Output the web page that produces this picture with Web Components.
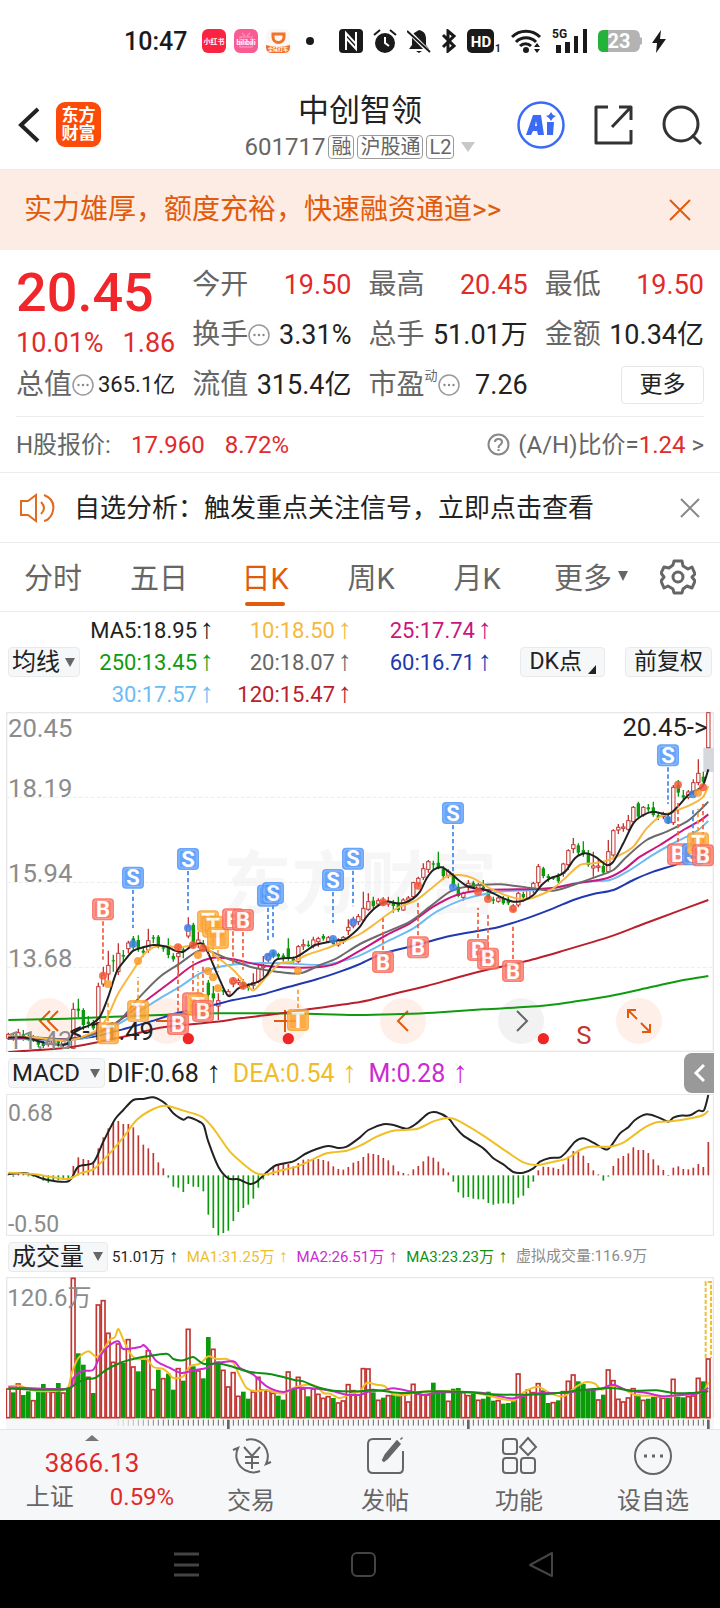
<!DOCTYPE html>
<html lang="zh-CN">
<head>
<meta charset="utf-8">
<meta name="viewport" content="width=device-width, initial-scale=1">
<title>中创智领 601717</title>
<style>
	:root {
		--text: #222;
		--text-soft: #666;
		--text-muted: #8c8c8c;
		--accent: #e25b0c;
		--up: #e02b2b;
		--line: #ececee;
		--chip-bg: #f6f7f9;
	}

	body {
		margin: 0;
		background: #fff;
		color: var(--text);
		font-family: Roboto, "Liberation Sans", "Noto Sans CJK SC", sans-serif;
		font-size: 24px;
	}
</style>
</head>
<body>
<system-status></system-status>
<stock-header name="中创智领" code="601717"></stock-header>
<main>
	<promo-banner>实力雄厚，额度充裕，快速融资通道&gt;&gt;</promo-banner>
	<quote-panel></quote-panel>
	<h-share-row></h-share-row>
	<notice-bar>自选分析：触发重点关注信号，立即点击查看</notice-bar>
	<period-tabs></period-tabs>
	<ma-legend></ma-legend>
	<price-chart></price-chart>
	<indicator-head>
		<pill-select slot="select" label="副图指标" value="MACD" size="97"></pill-select>
		<ind-value color="#222">DIF:0.68</ind-value>
		<ind-value color="#efbd2c">DEA:0.54</ind-value>
		<ind-value color="#cb2bd0">M:0.28</ind-value>
		<edge-toggle slot="end"></edge-toggle>
	</indicator-head>
	<macd-chart></macd-chart>
	<indicator-head dense>
		<pill-select slot="select" label="成交量指标" value="成交量" size="100"></pill-select>
		<ind-value color="#222">51.01万</ind-value>
		<ind-value color="#efbd2c">MA1:31.25万</ind-value>
		<ind-value color="#cb2bd0">MA2:26.51万</ind-value>
		<ind-value color="#109010">MA3:23.23万</ind-value>
		<ind-value color="#8c8c8c" flat>虚拟成交量:116.9万</ind-value>
	</indicator-head>
	<volume-chart></volume-chart>
</main>
<action-bar></action-bar>
<system-nav></system-nav>

<script>
const RED = '#c23531';
const GREEN = '#0a9a0a';
const STEP = 15;
const FIRST_X = 25;

const CANDLES = `
r,998,1003,1015,1020 r,1000,1008,1014,1022 r,986,998,1012,1018 g,990,1003,1012,1022 g,1003,1008,1016,1022
g,1005,1010,1020,1026 g,1010,1018,1034,1042 g,1020,1028,1038,1044 r,1018,1024,1034,1040 r,1015,1020,1030,1036
g,1016,1022,1030,1040 r,1018,1024,1034,1042 g,1018,1026,1036,1046 r,908,928,1045,1045 g,896,926,932,952
g,925,930,975,990 g,948,965,972,985 g,960,966,985,990 r,848,860,968,985 r,800,825,852,860
r,752,796,822,840 g,764,781,784,815 r,730,760,815,825 g,750,765,770,785 r,722,729,746,760
g,708,715,740,750 g,706,720,745,755 g,738,752,758,770 r,686,722,750,758 g,705,712,716,730
g,705,710,738,745 g,735,742,746,755 g,715,742,765,775 g,760,768,778,785 r,735,760,770,820
g,740,748,756,775 r,652,680,708,715 g,668,674,735,745 r,695,720,732,745 g,720,730,738,745
g,840,848,885,905 g,858,880,895,905 r,880,902,918,960 g,860,870,875,885 r,868,875,885,890
r,832,840,850,862 r,835,842,848,855 g,838,845,860,868 g,850,858,864,872 r,820,848,856,868
r,795,805,845,850 r,768,798,803,830 r,760,766,780,790 g,750,755,768,775 g,758,762,770,780
g,760,766,772,785 g,715,745,775,782 g,770,776,786,792 r,735,740,785,790 r,718,734,738,750
g,722,734,738,742 r,710,720,738,745 r,710,716,725,740 g,702,708,716,722 r,708,713,725,730
g,712,720,732,738 r,715,722,735,740 r,708,712,725,732 r,658,682,692,705 r,650,660,678,685
r,642,650,665,675 r,575,625,660,668 r,580,605,628,632 g,590,602,618,625 r,595,602,612,618
r,592,604,612,618 r,590,604,612,620 g,600,606,618,638 g,590,608,630,635 r,595,600,630,632
r,588,594,600,608 r,545,548,590,598 r,530,535,550,560 r,490,506,532,540 r,480,485,508,518
g,482,490,494,510 g,455,488,502,508 g,498,506,528,540 r,508,514,526,535 g,520,528,558,565
g,550,560,588,592 r,575,580,592,602 r,540,550,560,572 g,542,548,562,568 r,548,556,570,575
g,540,560,566,575 g,568,574,596,600 g,590,598,602,612 r,590,594,604,608 g,588,596,610,614
g,590,602,610,615 r,612,618,630,635 r,575,580,615,622 g,575,582,592,605 r,565,570,595,600
r,545,550,570,580 r,492,500,548,560 g,500,505,528,535 g,522,528,534,545 g,530,533,536,540
g,520,530,544,550 r,488,492,520,530 r,448,452,494,510 r,414,434,446,460 g,430,436,458,465
g,424,450,460,470 g,450,460,495,500 r,455,498,504,530 r,478,498,502,515 g,490,498,518,525
r,420,455,515,520 r,388,392,465,470 r,372,382,390,402 r,370,381,385,395 r,345,362,388,392
r,318,322,365,370 g,305,310,350,355 r,318,322,345,350 g,312,322,328,335 g,305,322,345,350
g,340,346,354,360 r,335,342,350,358 g,340,350,368,372 r,255,262,368,375 g,240,255,278,290
g,270,286,292,300 r,270,276,292,298 r,238,248,275,285 r,178,220,248,256 g,215,230,245,250
r,38,38,143,143`;

const AVERAGES = [
	['#109a10', '25,960 200,956 400,948 650,940 800,940 950,942 1080,945 1200,942 1300,938 1450,928 1620,918 1720,905 1830,888 1950,862 2050,840 2125,828'],
	['#b9202b', '25,1056 150,1048 220,1040 300,1025 380,1008 450,990 500,980 650,965 720,955 820,943 930,927 1080,906 1180,882 1280,858 1380,830 1480,805 1580,783 1680,755 1830,710 1930,672 2030,635 2125,600'],
	['#2038b0', '25,1016 200,1018 280,1010 380,985 450,965 530,940 620,920 700,900 780,885 850,865 950,838 1020,815 1080,792 1150,760 1250,735 1350,708 1450,690 1500,680 1580,655 1660,625 1720,600 1780,582 1840,570 1900,540 1960,515 2030,493 2080,470 2125,452'],
	['#6cbcf2', '25,1015 150,1020 250,1015 340,980 400,945 480,895 540,860 600,820 660,800 750,790 850,790 970,795 1020,785 1080,766 1160,725 1240,685 1310,635 1400,595 1500,575 1600,570 1680,560 1750,545 1830,540 1890,510 1950,470 2010,435 2060,410 2095,390 2125,363'],
	['#c9157d', '25,1012 150,1018 250,1010 330,980 400,930 460,885 520,840 580,795 640,773 700,778 780,795 850,802 950,802 1010,790 1080,752 1160,705 1230,670 1300,620 1370,585 1450,570 1550,568 1650,565 1720,552 1820,535 1870,510 1920,470 1980,435 2050,390 2100,362 2125,343'],
	['#6b6b6b', '25,1010 120,1013 220,1018 300,995 360,960 420,890 480,830 540,790 590,755 620,750 680,775 750,800 830,815 900,820 960,795 1010,775 1080,732 1150,700 1230,665 1290,620 1350,575 1400,560 1500,553 1600,565 1660,572 1720,555 1790,530 1840,510 1880,470 1940,420 2000,395 2060,365 2095,335 2125,305'],
	['#f8b840', '25,1008 100,1012 200,1022 260,1005 300,985 325,945 355,880 400,810 430,765 460,742 500,738 540,742 580,735 610,735 650,770 700,810 750,865 765,868 800,830 840,790 880,785 920,765 980,745 1040,720 1080,702 1120,675 1160,645 1200,620 1250,600 1300,560 1340,530 1380,525 1420,535 1470,565 1530,590 1580,598 1620,585 1660,565 1700,530 1740,495 1780,490 1820,482 1860,465 1900,440 1940,385 1980,350 2020,335 2060,320 2090,305 2110,290 2125,258'],
	['#222', '25,1013 70,1012 110,1022 150,1032 200,1032 220,1000 245,985 270,975 300,950 325,890 350,815 375,780 400,752 430,742 460,735 500,740 525,752 550,755 575,738 605,730 625,760 655,830 685,888 715,865 745,855 775,845 800,825 825,782 850,775 885,772 915,755 945,735 975,728 1005,722 1035,718 1060,700 1080,680 1100,650 1130,620 1160,605 1190,610 1215,608 1240,595 1260,575 1280,535 1300,510 1325,502 1350,518 1375,540 1400,558 1425,565 1450,568 1480,580 1510,595 1540,605 1570,602 1600,585 1625,555 1650,535 1680,525 1700,510 1725,475 1755,460 1785,470 1820,495 1840,485 1870,430 1900,370 1930,345 1960,335 2005,343 2035,318 2065,285 2095,268 2110,255 2125,208']
];

// letter, x, badge y, dot y
const MARKS = [
	['B', 309, 628, 827], ['T', 324, 1000, 852], ['S', 399, 533, 732], ['T', 414, 933, 783],
	['S', 564, 477, 684], ['B', 534, 972, 742], ['B', 579, 910, 735], ['T', 594, 915, 765],
	['B', 609, 933, 745], ['T', 624, 664, 813], ['T', 639, 680, 832], ['T', 654, 714, 865],
	['B', 699, 658, 843], ['B', 729, 660, 857], ['S', 804, 587, 770], ['S', 819, 579, 760],
	['T', 894, 960, 812], ['S', 999, 540, 717], ['S', 1059, 476, 667], ['B', 1149, 786, 607],
	['B', 1254, 742, 557], ['S', 1359, 339, 562], ['B', 1434, 750, 575], ['B', 1464, 776, 597],
	['B', 1539, 813, 627], ['S', 2004, 166, 360], ['B', 2034, 463, 254], ['S', 2079, 463, 283],
	['T', 2094, 430, 278], ['B', 2109, 466, 262]
];

const MARK_COLORS = {
	B: ['#fa6a5a', '#f4593a'],
	S: ['#4f96fb', '#3f83ea'],
	T: ['#fba12c', '#fb9a26']
};

const MACD_BARS = `373 380 372 370 379 380 382 392 398 390 390 390 392 348 322 327 330 335 295 262 235 218 213 222
222 232 256 284 295 309 337 355 383 410 413 426 402 410 411 424 494 534 556 549 542 513 486 474 464 446 413 388 372
347 342 341 342 349 339 329 328 327 327 330 334 349 357 359 351 338 333 321 310 312 315 324 331 346 364 369 373 358
348 334 319 323 335 355 367 395 427 443 441 446 448 448 459 464 461 460 460 463 443 437 414 395 361 350 351 353 357
343 320 303 306 317 339 361 373 392 380 348 325 318 310 292 300 300 309 328 346 360 378 353 349 357 358 353 342 351 276`;

const MACD_LINES = [
	['#222', '25,372 70,369 100,375 135,388 205,394 235,350 280,338 310,275 345,208 370,180 400,150 430,147 460,142 495,160 520,190 550,209 565,202 600,216 612,228 625,275 655,350 685,385 715,388 750,402 770,395 800,367 830,345 880,334 915,312 950,297 985,288 1015,294 1040,290 1080,262 1105,240 1150,223 1180,225 1220,236 1250,220 1285,190 1310,187 1345,205 1365,230 1390,257 1450,295 1480,325 1510,343 1540,366 1570,368 1600,355 1620,335 1650,324 1680,322 1700,305 1725,275 1750,265 1780,278 1815,298 1830,292 1860,250 1885,232 1905,210 1940,193 1975,202 2005,215 2020,203 2040,197 2070,196 2095,182 2112,181 2125,135'],
	['#f0bf24', '25,368 100,372 150,380 205,387 240,370 280,358 320,320 370,262 410,210 460,177 500,167 550,182 605,200 640,235 690,305 740,350 770,370 800,373 840,362 890,350 920,337 980,310 1040,302 1080,287 1130,260 1180,242 1250,237 1300,214 1350,204 1380,215 1450,257 1520,305 1570,337 1610,345 1660,335 1700,326 1740,300 1770,290 1830,290 1870,278 1930,235 1970,217 2020,213 2080,203 2110,195 2125,182']
];

const VOLUMES = `r447 g458 r432 g466 g455 r482 g452 g433 r455 r457 g430 r459 g445 r115 g341 g375 r412 g460 r195 r182
r280 r367 r312 g370 r299 r381 g395 g360 r332 r449 g390 r416 g402 g450 r386 g423 r268 g380 r393 g416 g292 r328 g365 r391
r441 r398 r469 g456 g477 r456 r412 r450 r452 r460 g468 g480 r396 g445 r412 r447 g470 r447 r463 r475 r470 g475 r489 r483
r434 r452 r465 r386 r387 g458 r481 g474 r467 g465 g465 r462 r486 r433 r463 r465 r465 g429 g457 g457 r484 g447 g445 r458
r467 g460 r481 g477 g456 g483 r482 g492 g490 g485 r402 g470 r450 r458 r431 g452 g490 r488 g482 r455 r424 r405 g425 g433
g448 g448 r480 g465 r390 r422 r478 r486 r474 r446 g465 r481 g477 g472 r470 r475 g474 r418 g471 g473 r470 r468 r415 g425 r357`;

const VOLUME_LINES = [
	['#f0bf24', '25,440 60,438 90,450 130,455 200,447 215,400 235,355 265,335 290,352 310,330 330,300 345,292 355,268 370,300 390,340 410,358 440,358 460,382 490,388 505,400 520,415 550,410 570,380 600,372 625,350 650,358 680,358 700,370 720,410 740,445 770,455 800,450 830,460 855,460 880,445 920,435 950,440 970,460 990,462 1020,475 1060,460 1080,455 1100,430 1130,435 1155,440 1180,465 1220,466 1250,457 1350,455 1400,458 1440,462 1480,472 1540,482 1575,455 1615,442 1650,460 1690,470 1730,440 1760,427 1785,432 1805,450 1840,438 1870,448 1910,467 1960,468 2000,472 2040,465 2080,462 2110,455 2125,428'],
	['#cb2bd0', '25,443 200,447 220,415 245,395 280,390 300,350 325,320 355,305 370,328 420,322 430,316 445,330 470,365 510,385 545,400 580,392 620,385 640,372 700,365 720,385 760,405 800,440 850,457 890,445 960,448 1000,455 1040,465 1080,465 1110,455 1150,452 1180,446 1230,455 1270,465 1320,458 1400,458 1450,460 1500,470 1540,476 1600,462 1660,460 1700,460 1750,452 1800,448 1840,435 1880,452 1940,460 1990,470 2040,466 2090,462 2125,445'],
	['#0f8f0f', '25,447 100,450 200,449 230,430 260,418 285,415 320,390 360,370 400,358 440,350 500,342 520,358 550,362 580,352 610,372 660,372 700,382 750,397 820,405 880,420 910,425 950,442 1000,453 1080,455 1120,450 1200,460 1300,455 1400,457 1450,462 1540,465 1650,462 1740,452 1830,445 1900,453 1970,452 2020,460 2070,460 2125,455']
];

const barX = (index) => FIRST_X + index * STEP;

function smoothPath(text) {
	const points = text.split(' ').map((pair) => pair.split(',').map(Number));
	let d = `M${points[0]}`;

	for (let i = 0; i < points.length - 1; i++) {
		const [p0, p1, p2, p3] = [points[i - 1] || points[i], points[i], points[i + 1], points[i + 2] || points[i + 1]];

		d += `C${p1[0] + (p2[0] - p0[0]) / 7},${p1[1] + (p2[1] - p0[1]) / 7}`
			+ ` ${p2[0] - (p3[0] - p1[0]) / 7},${p2[1] - (p3[1] - p1[1]) / 7} ${p2}`;
	}

	return d;
}

function drawLines(lines) {
	return lines.map(([color, text]) =>
		`<path d="${smoothPath(text)}" fill="none" stroke="${color}" stroke-width="6" stroke-linejoin="round"/>`
	).join('');
}

class BaseElement extends HTMLElement {
	constructor() {
		super();
		this.attachShadow({ mode: 'open' });
	}

	connectedCallback() {
		const template = document.createElement('template');

		template.innerHTML = `
			<style>
				:host { display: block; box-sizing: border-box; }
				*, *::before, *::after { box-sizing: border-box; }
				svg { display: block; flex: none; }
				button {
					margin: 0;
					padding: 0;
					border: 0;
					background: none;
					color: inherit;
					font: inherit;
					cursor: pointer;
				}
				a { color: inherit; text-decoration: none; }
			</style>
			${this._getMarkup()}`;
		this.shadowRoot.replaceChildren(template.content.cloneNode(true));
		this._afterRender();
	}

	_afterRender() {}
}

class SystemStatus extends BaseElement {
	_getMarkup() {
		return `
			<style>
				:host {
					display: flex;
					justify-content: space-between;
					align-items: center;
					height: 80px;
					padding: 2px 54px 0 124px;
					color: #1a1a1a;
				}
				div { display: flex; align-items: center; }
				.apps { gap: 8px; }
				.radio { gap: 10px; }
				time { margin-right: 7px; font-size: 25px; font-weight: 500; }
				text { font-family: Roboto, "Noto Sans CJK SC", sans-serif; font-weight: 700; }
			</style>
			<div class="apps">
				<time>10:47</time>
				<svg width="24" height="24" viewBox="0 0 24 24"><rect width="24" height="24" rx="6" fill="#fb2440"/><text x="12" y="15" font-size="7" fill="#fff" text-anchor="middle">小红书</text></svg>
				<svg width="24" height="24" viewBox="0 0 24 24"><rect width="24" height="24" rx="6" fill="#fb5b93"/><path d="M8 4l3 3M16 4l-3 3M6 8h12v10H6z" fill="none" stroke="#fd8db4" stroke-width="1.5"/><text x="12" y="16" font-size="7" fill="#fff" text-anchor="middle">bilibili</text></svg>
				<svg width="24" height="24" viewBox="0 0 24 24"><rect width="24" height="24" rx="6" fill="#faf8f5"/><path d="M0 16q12 4 24 0v2q0 6-6 6H6q-6 0-6-6z" fill="#f6712a"/><path d="M7 5h11v3a5 5 0 0 1-11 0z" fill="none" stroke="#f6712a" stroke-width="3"/><text x="12" y="22" font-size="5" fill="#fff" text-anchor="middle">全球打车</text></svg>
				<svg width="24" height="24" viewBox="0 0 24 24"><circle cx="12" cy="12" r="4" fill="currentColor"/></svg>
			</div>
			<div class="radio">
				<svg width="24" height="24" viewBox="0 0 24 24"><rect width="24" height="24" rx="4" fill="currentColor"/><path d="M7 21V4l10 11V9M17 3v17L7 9v6" fill="none" stroke="#fff" stroke-width="2"/></svg>
				<svg width="24" height="24" viewBox="0 0 24 24"><circle cx="12" cy="14" r="10" fill="currentColor"/><path d="M1 6l6-5M23 6l-6-5" stroke="currentColor" stroke-width="2"/><path d="M12 8v6l4 3" fill="none" stroke="#fff" stroke-width="2"/></svg>
				<svg width="24" height="24" viewBox="0 0 24 24"><path d="M12 1c5 1 7 4 7 9v6l3 4H2l3-4V9q0-3 2-5z" fill="currentColor"/><path d="M2 3l20 20" stroke="#fff" stroke-width="4"/><path d="M0 2l23 21" stroke="currentColor" stroke-width="2"/><path d="M9 22h6l-3 2z" fill="currentColor"/></svg>
				<svg width="16" height="24" viewBox="0 0 16 24"><path d="M2 6l11 11-6 5V2l6 5L2 18" fill="none" stroke="currentColor" stroke-width="3"/></svg>
				<svg width="34" height="24" viewBox="0 0 34 24"><rect width="27" height="24" rx="5" fill="currentColor"/><text x="14" y="18" font-size="15" fill="#fff" text-anchor="middle">HD</text><text x="28" y="23" font-size="10" fill="currentColor">1</text></svg>
				<svg width="31" height="24" viewBox="0 0 31 24"><g fill="none" stroke="currentColor" stroke-width="3"><path d="M1 8a20 20 0 0 1 28 0M5 13a14 14 0 0 1 20 0M9 17a8 8 0 0 1 11 0"/></g><circle cx="15" cy="21" r="3" fill="currentColor"/><path d="M23 18l3-4 3 4zM23 20h6l-3 4z" fill="currentColor"/></svg>
				<svg width="36" height="30" viewBox="0 0 36 30"><text x="0" y="12" font-size="12" fill="currentColor">5G</text><path d="M4 19h5v8H4zM13 16h5v11h-5zM22 10h4v17h-4zM31 3h4v24h-4z" fill="currentColor"/></svg>
				<svg width="44" height="24" viewBox="0 0 44 24"><path d="M6 1h30q6 0 6 7l2 1v6l-2 1q0 7-6 7H6q-6 0-6-6V7q0-6 6-6z" fill="#b3b3b3"/><path d="M6 1h4v22H6q-6 0-6-6V7q0-6 6-6z" fill="#24b33a"/><text x="21" y="19" font-size="20" fill="#fff" text-anchor="middle">23</text></svg>
				<svg width="14" height="24" viewBox="0 0 14 24"><path d="M9 1L0 14h5l-1 10 10-14H8z" fill="currentColor"/></svg>
			</div>`;
	}
}

class StockHeader extends BaseElement {
	_getMarkup() {
		return `
			<style>
				:host {
					display: grid;
					grid-template-columns: 1fr auto 1fr;
					align-items: center;
					height: 90px;
					padding: 0 18px;
					border-bottom: 1px solid var(--line);
				}
				.left, .right { display: flex; align-items: center; }
				.left { gap: 14px; }
				.right { gap: 29px; justify-content: flex-end; }
				.brand {
					width: 45px;
					height: 45px;
					padding: 4px 0;
					border-radius: 9px;
					background: #fc4b08;
					color: #fff;
					font-size: 17px;
					font-weight: 700;
					line-height: 18px;
					text-align: center;
				}
				.brand span { display: block; }
				.center { text-align: center; }
				h1 { margin: 4px 0 0; font-size: 31px; font-weight: 400; line-height: 40px; }
				.sub {
					display: flex;
					align-items: center;
					gap: 3px;
					height: 32px;
					color: var(--text-soft);
				}
				.tag {
					padding: 0 2px;
					border: 1px solid #9a9a9a;
					border-radius: 4px;
					font-size: 20px;
					line-height: 22px;
				}
				.sub svg { margin-left: 4px; }
			</style>
			<div class="left">
				<button aria-label="返回"><svg width="24" height="40" viewBox="0 0 24 40"><path d="M20 4L3 20l17 16" fill="none" stroke="#222" stroke-width="4"/></svg></button>
				<a class="brand" href="#home"><span>东方</span><span>财富</span></a>
			</div>
			<div class="center">
				<h1>${this.getAttribute('name')}</h1>
				<div class="sub">
					<span>${this.getAttribute('code')}</span>
					<span class="tag">融</span><span class="tag">沪股通</span><span class="tag">L2</span>
					<svg width="14" height="10" viewBox="0 0 14 10"><path d="M0 0h14L7 10z" fill="#c8c8c8"/></svg>
				</div>
			</div>
			<div class="right">
				<button aria-label="Ai"><svg width="48" height="48" viewBox="0 0 48 48"><circle cx="24" cy="24" r="22.500" fill="none" stroke="#3b6bf5" stroke-width="2.500"/><path fill="#3b6bf5" fill-rule="evenodd" d="M9 34l7-20h8l3 20h-6l-1-4h-4l-2 4zM18 25h2l-1-5zM30 21h7l-1 13h-6z"/><path d="M34 11l2 3 3 1-3 2-2 3-2-3-3-2 3-1z" fill="#3b6bf5"/></svg></button>
				<button aria-label="分享"><svg width="39" height="40" viewBox="0 0 39 40"><path d="M14 2H2v36h35V25M25 2h12v13M37 2L18 22" fill="none" stroke="#333" stroke-width="3" stroke-linejoin="round"/></svg></button>
				<button aria-label="搜索"><svg width="40" height="40" viewBox="0 0 40 40"><circle cx="19" cy="19" r="17" fill="none" stroke="#333" stroke-width="3"/><path d="M30 30l9 9" stroke="#333" stroke-width="3"/></svg></button>
			</div>`;
	}
}

class PromoBanner extends BaseElement {
	_getMarkup() {
		return `
			<style>
				:host {
					display: flex;
					justify-content: space-between;
					align-items: center;
					height: 80px;
					padding: 0 28px 0 24px;
					background: #fcece3;
					color: var(--accent);
					font-size: 28px;
					line-height: 36px;
				}
			</style>
			<a href="#margin"><slot></slot></a>
			<button aria-label="关闭"><svg width="24" height="24" viewBox="0 0 24 24"><path d="M2 2l20 20M22 2L2 22" stroke="currentColor" stroke-width="2"/></svg></button>`;
	}
}

class QuoteCell extends BaseElement {
	_getMarkup() {
		const tip = this.hasAttribute('tip')
			? '<svg width="22" height="22" viewBox="0 0 22 22"><circle cx="11" cy="11" r="10" fill="none" stroke="#999" stroke-width="1.500"/><circle cx="6.500" cy="11" r="1.200" fill="#888"/><circle cx="11" cy="11" r="1.200" fill="#888"/><circle cx="15.500" cy="11" r="1.200" fill="#888"/></svg>'
			: '';
		const sup = this.hasAttribute('sup') ? `<sup>${this.getAttribute('sup')}</sup>` : '';

		return `
			<style>
				:host {
					display: flex;
					align-items: center;
					justify-content: space-between;
					white-space: nowrap;
					color: var(--text);
					font-size: 27px;
					line-height: 32px;
				}
				.label { display: flex; align-items: center; color: var(--text-soft); font-size: 28px; }
				sup { align-self: flex-start; font-size: 13px; line-height: 13px; }
				:host([up]) .value { color: var(--up); }
				:host([small]) .value { font-size: 22px; }
			</style>
			<span class="label">${this.getAttribute('label')}${sup}${tip}</span>
			<span class="value"><slot></slot></span>`;
	}
}

class QuotePanel extends BaseElement {
	_getMarkup() {
		return `
			<style>
				:host {
					display: grid;
					grid-template-columns: repeat(4, 1fr);
					grid-template-rows: repeat(3, 50px);
					column-gap: 17px;
					margin: 0 16px;
					padding: 10px 0 6px;
					border-bottom: 1px solid var(--line);
				}
				.price { grid-row: span 2; color: #f0262a; }
				.last { padding-top: 3px; font-size: 54px; font-weight: 500; line-height: 60px; }
				.change { display: flex; justify-content: space-between; color: var(--up); font-size: 27px; line-height: 40px; }
				.more {
					align-self: center;
					justify-self: end;
					width: 83px;
					height: 38px;
					border: 1px solid #e6e6e6;
					border-radius: 4px;
					font-size: 23px;
					line-height: 34px;
				}
			</style>
			<div class="price">
				<div class="last">20.45</div>
				<div class="change"><span>10.01%</span><span>1.86</span></div>
			</div>
			<quote-cell label="今开" up>19.50</quote-cell>
			<quote-cell label="最高" up>20.45</quote-cell>
			<quote-cell label="最低" up>19.50</quote-cell>
			<quote-cell label="换手" tip>3.31%</quote-cell>
			<quote-cell label="总手">51.01万</quote-cell>
			<quote-cell label="金额">10.34亿</quote-cell>
			<quote-cell label="总值" tip small>365.1亿</quote-cell>
			<quote-cell label="流值">315.4亿</quote-cell>
			<quote-cell label="市盈" sup="动" tip>7.26</quote-cell>
			<button class="more">更多</button>`;
	}
}

class HShareRow extends BaseElement {
	_getMarkup() {
		return `
			<style>
				:host {
					display: flex;
					align-items: center;
					height: 56px;
					padding: 0 16px;
					border-bottom: 1px solid var(--line);
					color: var(--text-soft);
					line-height: 28px;
				}
				.up { color: var(--up); }
				.price { margin: 0 20px; }
				a { display: flex; align-items: center; gap: 8px; margin-left: auto; }
			</style>
			<span>H股报价:</span>
			<span class="up price">17.960</span>
			<span class="up">8.72%</span>
			<a href="#ah">
				<svg width="23" height="23" viewBox="0 0 23 23"><circle cx="11.500" cy="11.500" r="10" fill="none" stroke="#888" stroke-width="2"/><path d="M8 9q0-3 3.500-3T15 9q0 2-2 3-1.500 1-1.500 3M11.500 16v2" fill="none" stroke="#888" stroke-width="2"/></svg>
				<span>(A/H)比价=<span class="up">1.24</span> &gt;</span>
			</a>`;
	}
}

class NoticeBar extends BaseElement {
	_getMarkup() {
		return `
			<style>
				:host {
					display: flex;
					align-items: center;
					height: 70px;
					padding: 0 20px;
					border-bottom: 1px solid var(--line);
					font-size: 26px;
					line-height: 32px;
				}
				a { flex: 1; margin-left: 19px; }
			</style>
			<svg width="35" height="30" viewBox="0 0 35 30" fill="none" stroke="#e06a20" stroke-width="2"><path d="M16 2v26L8 22H1V8h7zM21 9q6 6 0 12M24 2q13 5 8 19-3 6-8 7"/></svg>
			<a href="#analysis"><slot></slot></a>
			<button aria-label="关闭"><svg width="20" height="20" viewBox="0 0 20 20"><path d="M1 1l18 18M19 1L1 19" stroke="#888" stroke-width="2"/></svg></button>`;
	}
}

class PeriodTabs extends BaseElement {
	_getMarkup() {
		const tabs = ['分时', '五日', '日K', '周K', '月K'];

		return `
			<style>
				:host {
					display: grid;
					grid-template-columns: repeat(5, 106fr) 122fr 68fr;
					height: 69px;
					border-bottom: 1px solid var(--line);
					color: var(--text-soft);
					font-size: 29px;
				}
				button {
					display: grid;
					grid-template-rows: 1fr 4px;
					justify-items: center;
					align-items: center;
					padding: 6px 0 5px;
				}
				button::after { content: ""; width: 40px; height: 4px; border-radius: 2px; }
				[aria-selected=true] { color: var(--accent); }
				[aria-selected=true]::after { background: var(--accent); }
				.more { display: flex; justify-content: center; gap: 6px; padding: 0 0 2px; }
				.more::after, .gear::after { content: none; }
				.gear { display: flex; justify-content: flex-start; padding: 0 0 0 8px; }
			</style>
			${tabs.map((tab) => `<button role="tab" aria-selected="${tab === '日K'}">${tab}</button>`).join('')}
			<button class="more">更多<svg width="10" height="10" viewBox="0 0 10 10"><path d="M0 0h10L5 10z" fill="currentColor"/></svg></button>
			<button class="gear" aria-label="设置"><svg width="36" height="36" viewBox="0 0 36 36" fill="none" stroke="#666" stroke-width="3" stroke-linejoin="round"><path d="M14 2h8l1 5 5 3 4-2 3 7-3 3 3 4-3 7-5-2-4 3-1 4h-8l-1-4-5-3-4 2-3-7 3-4-3-4 3-6 5 1 4-3z"/><circle cx="18" cy="18" r="5"/></svg></button>`;
	}

	_afterRender() {
		const tabs = this.shadowRoot.querySelectorAll('[role=tab]');

		tabs.forEach((tab) => tab.addEventListener('click', () => {
			tabs.forEach((item) => item.setAttribute('aria-selected', item === tab));
		}));
	}
}

class PillSelect extends BaseElement {
	_getMarkup() {
		return `
			<style>
				:host { display: inline-grid; align-items: center; width: ${this.getAttribute('size')}px; height: 30px; }
				select {
					grid-area: 1 / 1;
					width: 100%;
					height: 30px;
					padding: 0 0 0 3px;
					border: 1px solid #e9eaec;
					border-radius: 4px;
					background: var(--chip-bg);
					color: var(--text);
					font: inherit;
					font-size: 24px;
					line-height: 28px;
					appearance: none;
				}
				svg { grid-area: 1 / 1; justify-self: end; margin-right: 5px; pointer-events: none; }
			</style>
			<select aria-label="${this.getAttribute('label')}"><option>${this.getAttribute('value')}</option></select>
			<svg width="10" height="9" viewBox="0 0 10 9"><path d="M0 0h10L5 9z" fill="#666"/></svg>`;
	}
}

class MaLegend extends BaseElement {
	_getMarkup() {
		const items = [
			['MA5:18.95', '#222'], ['10:18.50', '#f5b942'], ['25:17.74', '#c9157d'],
			['250:13.45', '#109a10'], ['20:18.07', '#666'], ['60:16.71', '#2038b0'],
			['30:17.57', '#6cbcf2'], ['120:15.47', '#b9202b']
		];

		return `
			<style>
				:host { display: flex; align-items: center; height: 100px; padding: 0 8px; }
				.values {
					display: grid;
					grid-template-columns: 134px 138px 140px;
					grid-auto-rows: 32px;
					padding-top: 1px;
					font-size: 22px;
					line-height: 32px;
					text-align: right;
				}
				.values i { display: inline-block; width: 17px; font-size: 28px; font-style: normal; line-height: 28px; }
				.chip {
					display: flex;
					justify-content: center;
					align-items: center;
					gap: 6px;
					height: 30px;
					margin-left: 20px;
					padding: 0 8px;
					border: 1px solid #e9eaec;
					border-radius: 4px;
					background: var(--chip-bg);
					font-size: 23px;
					line-height: 28px;
				}
				.chip:first-of-type { margin-left: auto; }
				.chip svg { align-self: flex-end; margin-bottom: 2px; }
			</style>
			<pill-select label="主图指标" value="均线" size="72"></pill-select>
			<div class="values">${items.map(([text, color]) => `<span style="color: ${color}">${text}<i>↑</i></span>`).join('')}</div>
			<button class="chip">DK点<svg width="8" height="9" viewBox="0 0 8 9"><path d="M8 0v9H0z" fill="#222"/></svg></button>
			<button class="chip">前复权</button>`;
	}
}

class PriceChart extends BaseElement {
	_getMarkup() {
		const buttons = [
			['后退', 'M22 11L12 21l10 10M30 11L20 21l10 10', ''],
			['缩小', 'M10 21h22', ''],
			['放大', 'M10 21h22M21 10v22', ''],
			['左移', 'M26 11L16 21l10 10', ''],
			['右移', 'M17 11l10 10-10 10', 'grey'],
			['全屏', 'M10 18v-8h8M10 10l9 9M32 24v8h-8M32 32l-9-9', '']
		];

		return `
			<style>
				:host { display: grid; margin: 0 6px; }
				.plot, .tools { grid-area: 1 / 1; }
				.plot { width: 100%; height: auto; pointer-events: none; }
				.tools {
					display: flex;
					justify-content: space-between;
					align-self: end;
					padding: 0 52px 8px 20px;
				}
				.tools button {
					display: grid;
					place-items: center;
					width: 46px;
					height: 46px;
					border-radius: 50%;
					background: #fef0e9;
					color: var(--accent);
				}
				.tools .grey { background: #f2f2f2; color: #666; }
				text { font-family: Roboto, "Noto Sans CJK SC", sans-serif; font-size: 77px; }
				.scale { fill: var(--text-muted); }
				.water { font-size: 205px; font-weight: 700; fill: #f6f6f6; }
				.letter { font-size: 66px; font-weight: 700; fill: #fff; text-anchor: middle; }
			</style>
			<div class="tools">
				${buttons.map(([label, d, kind]) => `<button class="${kind}" aria-label="${label}"><svg width="42" height="42" viewBox="0 0 42 42"><path d="${d}" fill="none" stroke="currentColor" stroke-width="2"/></svg></button>`).join('')}
			</div>
			<svg class="plot" viewBox="18 36 2124 1020" role="img" aria-label="日K线图">
				<text class="water" x="670" y="625">东方财富</text>
				<path d="M20 292H2140M20 547H2140M20 802H2140" stroke="#ececec" stroke-width="3" stroke-dasharray="12 6"/>
				<rect x="20" y="38" width="2120" height="1016" fill="none" stroke="#e8e8ea" stroke-width="4"/>
				<rect x="2110" y="143" width="32" height="73" fill="#d5d9de"/>
				${this._drawCandles()}
				${drawLines(AVERAGES)}
				${MARKS.map((mark) => this._drawStem(mark)).join('')}
				<g class="scale">
					<text x="24" y="110">20.45</text>
					<text x="24" y="290">18.19</text>
					<text x="24" y="545">15.94</text>
					<text x="24" y="801">13.68</text>
					<text x="24" y="1046">11.43</text>
				</g>
				<text x="462" y="1020" text-anchor="end" fill="#222">&lt;-11.49</text>
				<text x="2122" y="108" text-anchor="end" fill="#222">20.45-&gt;</text>
				${MARKS.map((mark) => this._drawBadge(mark)).join('')}
				<g fill="#f02626"><circle cx="565" cy="1016" r="17"/><circle cx="865" cy="1016" r="17"/><circle cx="1630" cy="1016" r="17"/></g>
				<text x="1729" y="1032" fill="#c23531">S</text>
			</svg>`;
	}

	_drawCandles() {
		return CANDLES.trim().split(/\s+/).map((text, index) => {
			const [color, high, top, bottom, low] = text.split(',');
			const x = barX(index);

			if (color === 'g') {
				return `<path d="M${x} ${high}V${low}" stroke="${GREEN}" stroke-width="4"/>`
					+ `<rect x="${x - 5}" y="${top}" width="10" height="${bottom - top}" fill="${GREEN}"/>`;
			}

			return `<path d="M${x} ${high}V${top}M${x} ${bottom}V${low}" stroke="${RED}" stroke-width="4"/>`
				+ `<rect x="${x - 5}" y="${top}" width="10" height="${bottom - top}" fill="none" stroke="${RED}" stroke-width="3"/>`;
		}).join('');
	}

	_drawStem([letter, x, badge, dot]) {
		const side = badge < dot ? 1 : -1;

		return `<path d="M${x} ${badge + side * 36}V${dot - side * 48}" stroke="${MARK_COLORS[letter][1]}" stroke-width="5" stroke-dasharray="13 8"/>`
			+ `<circle cx="${x}" cy="${dot}" r="12" fill="${MARK_COLORS[letter][1]}" opacity=".85"/>`;
	}

	_drawBadge([letter, x, badge]) {
		return `<g opacity=".86"><rect x="${x - 33}" y="${badge - 33}" width="66" height="66" rx="12" fill="${MARK_COLORS[letter][0]}"/>`
			+ `<rect x="${x - 27}" y="${badge - 27}" width="54" height="54" rx="8" fill="none" stroke="#fff" stroke-opacity=".3" stroke-width="3"/>`
			+ `<text class="letter" x="${x}" y="${badge + 23}">${letter}</text></g>`;
	}
}

class IndicatorHead extends BaseElement {
	_getMarkup() {
		return `
			<style>
				:host { display: flex; align-items: center; height: 42px; margin: 0 6px 0 8px; font-size: 25px; white-space: nowrap; }
				:host([dense]) { height: 41px; font-size: 15px; }
				.values { display: flex; flex: 1; gap: 4px; margin-left: 2px; }
				:host([dense]) .values { margin-left: 4px; }
			</style>
			<slot name="select"></slot>
			<div class="values"><slot></slot></div>
			<slot name="end"></slot>`;
	}
}

class IndValue extends BaseElement {
	_getMarkup() {
		const arrow = this.hasAttribute('flat') ? '' : '<i>↑</i>';

		return `
			<style>
				:host { color: ${this.getAttribute('color')}; line-height: 30px; }
				i { display: inline-block; width: 1em; font-size: 120%; font-style: normal; line-height: 30px; text-align: center; }
			</style>
			<slot></slot>${arrow}`;
	}
}

class EdgeToggle extends BaseElement {
	_getMarkup() {
		return `
			<style>
				button {
					display: grid;
					place-items: center;
					width: 30px;
					height: 40px;
					border-radius: 8px 0 0 8px;
					background: #999;
				}
			</style>
			<button aria-label="展开"><svg width="12" height="20" viewBox="0 0 12 20"><path d="M11 2L3 10l8 8" fill="none" stroke="#fff" stroke-width="3"/></svg></button>`;
	}
}

class MacdChart extends BaseElement {
	_getMarkup() {
		const bars = MACD_BARS.split(/\s+/).map((y, index) =>
			`<path d="M${barX(index)} 376V${y}" stroke="${y < 376 ? RED : GREEN}" stroke-width="5"/>`
		).join('');

		return `
			<style>
				:host { margin: 0 6px; }
				svg { width: 100%; height: auto; }
				text { font-family: Roboto, sans-serif; font-size: 69px; fill: var(--text-muted); }
			</style>
			<svg viewBox="18 132 2124 426" role="img" aria-label="MACD">
				<rect x="20" y="133" width="2120" height="423" fill="none" stroke="#e4e4e6" stroke-width="3"/>
				${bars}
				${drawLines(MACD_LINES)}
				<text x="24" y="212">0.68</text>
				<text x="24" y="547">-0.50</text>
			</svg>`;
	}
}

class VolumeChart extends BaseElement {
	_getMarkup() {
		const bars = VOLUMES.split(/\s+/).map((text, index) => {
			const x = barX(index);
			const y = Number(text.slice(1));

			if (text[0] === 'g') {
				return `<rect x="${x - 7}" y="${y}" width="14" height="${536 - y}" fill="${GREEN}"/>`;
			}

			return `<rect x="${x - 6}" y="${y + 1}" width="11" height="${533 - y}" fill="#fff" stroke="${RED}" stroke-width="5"/>`;
		}).join('');
		let ticks = '';

		for (let i = 22; i <= 140; i++) {
			const major = (i - 44) % 48 === 0;

			ticks += `<path d="M${barX(i)} 540V${major ? 568 : 558}" stroke="#666" stroke-width="${major ? 8 : 3}" opacity="${Math.min(1, (i - 20) / 12)}"/>`;
		}

		return `
			<style>
				:host { margin: 0 6px; }
				svg { width: 100%; height: auto; }
				text { font-family: Roboto, "Noto Sans CJK SC", sans-serif; font-size: 72px; fill: var(--text-muted); }
			</style>
			<svg viewBox="18 112 2124 456" role="img" aria-label="成交量">
				<rect x="18" y="538" width="2124" height="30" fill="#f7f7f9"/>
				<path d="M20 536V114H2140V536" fill="none" stroke="#e8e8ea" stroke-width="4"/>
				${bars}
				<path d="M2117 355V127H2133V355" fill="none" stroke="#edbf35" stroke-width="6" stroke-dasharray="13 5"/>
				${drawLines(VOLUME_LINES)}
				<text x="22" y="199">120.6万</text>
				${ticks}
			</svg>`;
	}
}

class ActionBar extends BaseElement {
	_getMarkup() {
		const items = [
			['交易', '<path d="M16 5a17 17 0 0 1 20 24l5-2M30 36A17 17 0 0 1 8 13l-5 2M14 12l8 9 8-9M22 21v13M15 22h14M15 28h14"/>'],
			['发帖', '<path d="M27 4H9q-5 0-5 5v24q0 5 5 5h26q4 0 4-5V16"/><path d="M19 26l3-6L33 7l2 2-12 14zM37 3l1 1" stroke-width="3"/>'],
			['功能', '<rect x="5" y="4" width="14" height="15" rx="3"/><rect x="5" y="23" width="14" height="15" rx="3"/><rect x="23" y="23" width="14" height="15" rx="3"/><path d="M30 3l8 9-8 8-8-8z"/>'],
			['设自选', '<circle cx="21" cy="21" r="18"/><path d="M12 21h3M20 21h3M28 21h3" stroke-width="3"/>']
		];

		return `
			<style>
				:host {
					display: grid;
					grid-template-columns: 184fr repeat(4, 134fr);
					height: 91px;
					border-top: 1px solid #e4e5e8;
					background: #f6f7f9;
					color: var(--text-soft);
				}
				a { display: flex; flex-direction: column; align-items: center; padding-top: 5px; }
				a > span { padding-top: 4px; font-size: 24px; line-height: 40px; }
				.index .point { color: var(--up); font-size: 26px; line-height: 36px; }
				.index .row { display: flex; gap: 36px; padding: 0 0 0 16px; line-height: 32px; }
				.index b { color: var(--up); font-weight: 400; }
			</style>
			<a class="index" href="#index">
				<svg width="14" height="6" viewBox="0 0 14 6"><path d="M0 6l7-6 7 6z" fill="#777"/></svg>
				<span class="point">3866.13</span>
				<span class="row">上证<b>0.59%</b></span>
			</a>
			${items.map(([label, shape]) => `<a href="#"><svg width="42" height="42" viewBox="0 0 42 42" fill="none" stroke="#666" stroke-width="2">${shape}</svg><span>${label}</span></a>`).join('')}`;
	}
}

class SystemNav extends BaseElement {
	_getMarkup() {
		return `
			<style>
				:host {
					display: flex;
					justify-content: space-between;
					align-items: center;
					height: 88px;
					padding: 0 166px 0 174px;
					background: #000;
				}
			</style>
			<button aria-label="菜单"><svg width="25" height="25" viewBox="0 0 25 25"><path d="M0 2h25M0 13h25M0 23h25" stroke="#444" stroke-width="3"/></svg></button>
			<button aria-label="主页"><svg width="25" height="25" viewBox="0 0 25 25"><rect x="1" y="1" width="23" height="23" rx="5" fill="none" stroke="#444" stroke-width="2"/></svg></button>
			<button aria-label="返回"><svg width="26" height="27" viewBox="0 0 26 27"><path d="M24 2v23L2 14z" fill="none" stroke="#444" stroke-width="2" stroke-linejoin="round"/></svg></button>`;
	}
}

customElements.define('system-status', SystemStatus);
customElements.define('stock-header', StockHeader);
customElements.define('promo-banner', PromoBanner);
customElements.define('quote-cell', QuoteCell);
customElements.define('quote-panel', QuotePanel);
customElements.define('h-share-row', HShareRow);
customElements.define('notice-bar', NoticeBar);
customElements.define('period-tabs', PeriodTabs);
customElements.define('pill-select', PillSelect);
customElements.define('ma-legend', MaLegend);
customElements.define('price-chart', PriceChart);
customElements.define('indicator-head', IndicatorHead);
customElements.define('ind-value', IndValue);
customElements.define('edge-toggle', EdgeToggle);
customElements.define('macd-chart', MacdChart);
customElements.define('volume-chart', VolumeChart);
customElements.define('action-bar', ActionBar);
customElements.define('system-nav', SystemNav);
</script>
</body>
</html>
